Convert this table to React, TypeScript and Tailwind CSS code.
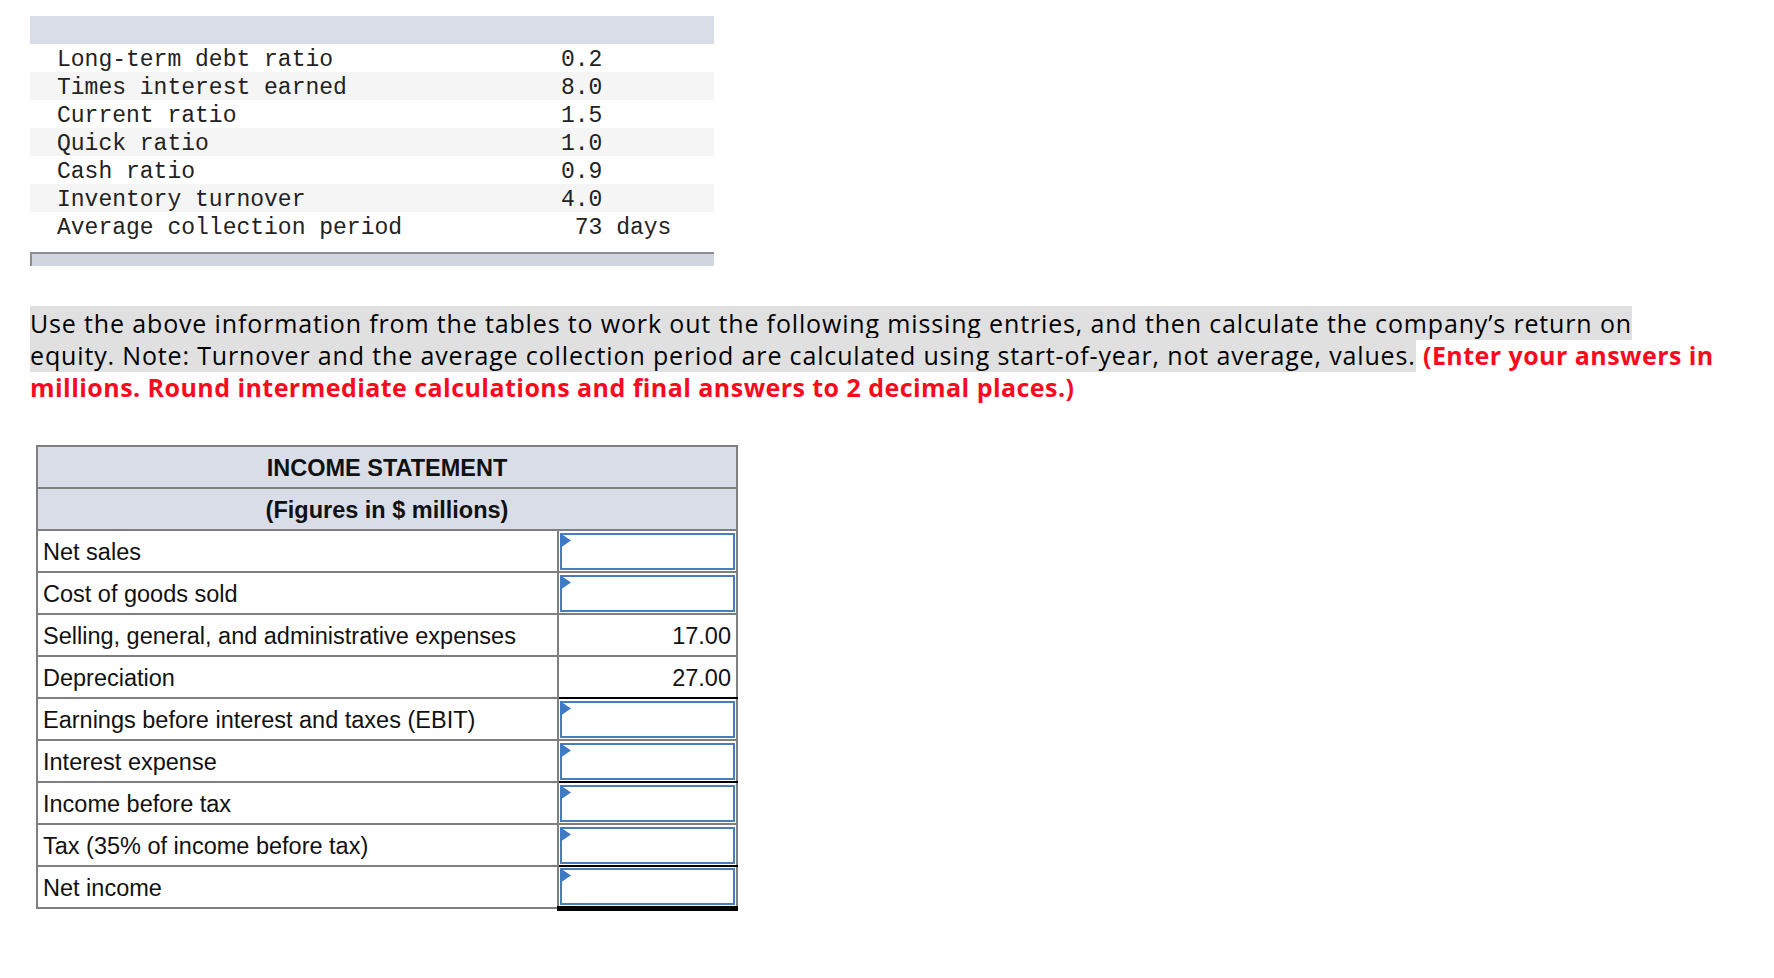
import React from "react";

const ratios: [string, string][] = [
  ["Long-term debt ratio", "0.2"],
  ["Times interest earned", "8.0"],
  ["Current ratio", "1.5"],
  ["Quick ratio", "1.0"],
  ["Cash ratio", "0.9"],
  ["Inventory turnover", "4.0"],
  ["Average collection period", " 73 days"],
];

type Line = {
  label: string;
  value?: string;
  cellClass?: string;
};

const lines: Line[] = [
  { label: "Net sales" },
  { label: "Cost of goods sold" },
  { label: "Selling, general, and administrative expenses", value: "17.00" },
  { label: "Depreciation", value: "27.00", cellClass: "border-b-black" },
  { label: "Earnings before interest and taxes (EBIT)" },
  { label: "Interest expense", cellClass: "border-b-black" },
  { label: "Income before tax" },
  { label: "Tax (35% of income before tax)", cellClass: "border-b-black" },
  { label: "Net income", cellClass: "border-b-[5px] border-b-black" },
];

function InputBox() {
  return (
    <div className="relative mx-px h-[37px] border-2 border-[#4a7ebb] bg-white">
      <svg
        className="absolute -left-0.5 -top-0.5"
        width="11"
        height="15"
        viewBox="0 0 11 15"
      >
        <polygon points="0,0 11,7.5 0,15" fill="#3f7ac4" />
      </svg>
    </div>
  );
}

export default function App() {
  return (
    <div className="min-h-screen w-full bg-white pl-[30px] pt-[16px] text-[#111]">
      {/* ratio table */}
      <div className="w-[684px] font-['Liberation_Mono',monospace] text-[23px] text-[#222]">
        <div className="h-[28px] bg-[#d9dde7]" />
        {ratios.map(([label, value], i) => (
          <div
            key={label}
            className={`flex h-[28px] items-center pt-[4px] ${i % 2 === 1 ? "bg-[#f5f5f5]" : "bg-white"}`}
          >
            <div className="w-[531px] pl-[27px]">{label}</div>
            <div className="whitespace-pre">{value}</div>
          </div>
        ))}
        <div className="mt-[12px] h-[14px] border-l-2 border-t-2 border-[#8a8d93] bg-[#d1d6e0]" />
      </div>

      {/* question text */}
      <p className="mt-[41px] font-['Open_Sans',sans-serif] text-[25px] leading-[32px] tracking-[0.85px] text-black">
        <span className="bg-[#e0e0e0]">
          Use the above information from the tables to work out the following missing entries, and then calculate the company’s return on
        </span>
        <br />
        <span className="bg-[#e0e0e0]">
          equity. Note: Turnover and the average collection period are calculated using start-of-year, not average, values.
        </span>{" "}
        <strong className="tracking-[0.45px] text-[#fa0a1e]">(Enter your answers in</strong>
        <br />
        <strong className="tracking-[0.45px] text-[#fa0a1e]">
          millions. Round intermediate calculations and final answers to 2 decimal places.)
        </strong>
      </p>

      {/* income statement */}
      <table className="mt-[42px] ml-[6px] w-[702px] border-collapse font-['Liberation_Sans',Arial,sans-serif] text-[23.5px] text-[#111]">
        <thead>
          <tr>
            <th colSpan={2} className="h-[42px] border-2 border-[#7f7f7f] bg-[#d9dde8] pt-[3px] text-center font-bold">
              INCOME STATEMENT
            </th>
          </tr>
          <tr>
            <th colSpan={2} className="h-[42px] border-2 border-[#7f7f7f] bg-[#d9dde8] pt-[3px] text-center font-bold">
              (Figures in $ millions)
            </th>
          </tr>
        </thead>
        <tbody>
          {lines.map((line) => (
            <tr key={line.label}>
              <td className="h-[42px] w-[521px] border-2 border-[#7f7f7f] pl-[5px] pt-[3px] text-left">
                {line.label}
              </td>
              <td className={`h-[42px] border-2 border-[#7f7f7f] p-0 text-right ${line.cellClass ?? ""}`}>
                {line.value ? <div className="pr-[5px] pt-[3px]">{line.value}</div> : <InputBox />}
              </td>
            </tr>
          ))}
        </tbody>
      </table>
    </div>
  );
}
